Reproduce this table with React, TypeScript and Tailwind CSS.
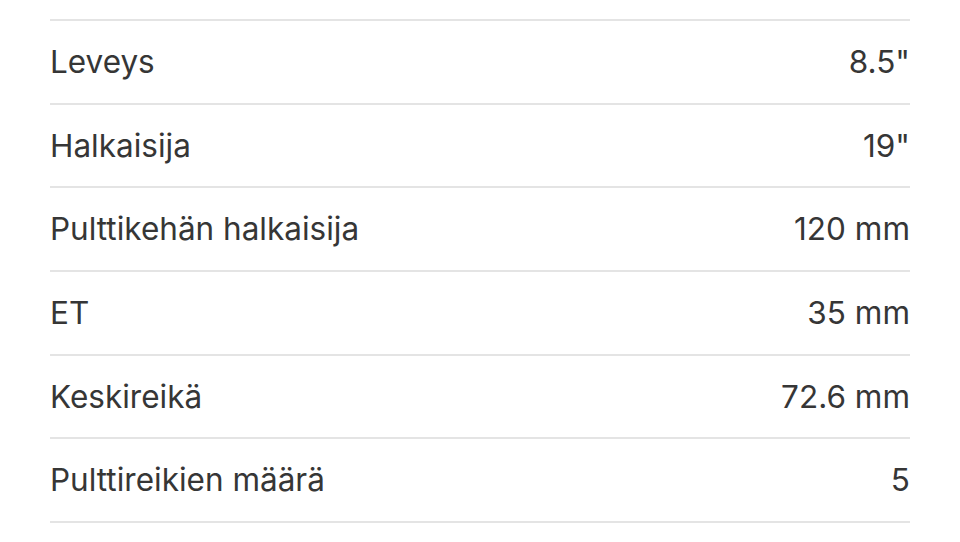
const specs = [
  { label: "Leveys", value: '8.5"' },
  { label: "Halkaisija", value: '19"' },
  { label: "Pulttikehän halkaisija", value: "120 mm" },
  { label: "ET", value: "35 mm" },
  { label: "Keskireikä", value: "72.6 mm" },
  { label: "Pulttireikien määrä", value: "5" },
];

export default function App() {
  return (
    <main className="min-h-screen bg-white px-[50px] pt-[19px] font-['Inter',_'Noto_Sans',_sans-serif] text-[#363636]">
      <div className="border-t-2 border-[#e4e4e4]">
        {specs.map((s) => (
          <div
            key={s.label}
            className="flex h-[83.67px] items-center justify-between border-b-2 border-[#e4e4e4] text-[31.5px] leading-none"
          >
            <span>{s.label}</span>
            <span>{s.value}</span>
          </div>
        ))}
      </div>
    </main>
  );
}
